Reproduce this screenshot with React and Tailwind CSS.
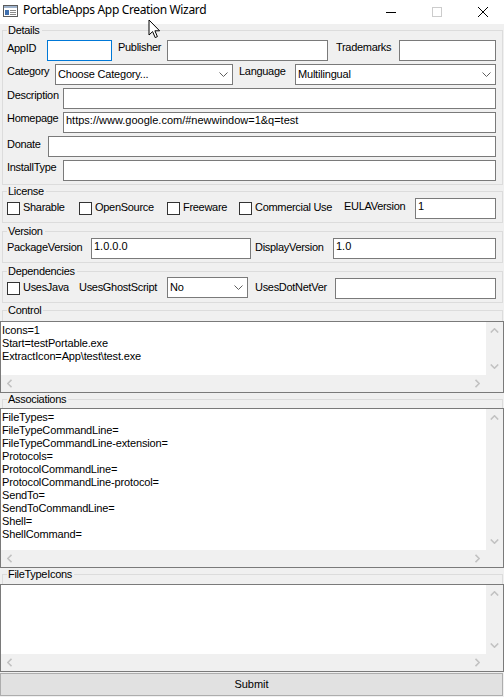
import React from "react";

const label = "shrink-0 whitespace-nowrap text-[11px] leading-[13px] tracking-[-0.3px] text-black";

function Label({ className = "", children }) {
  return <span className={`${label} ${className}`}>{children}</span>;
}

function Input({ className = "", value = "", focused = false }) {
  return (
    <div
      className={`h-[21px] shrink-0 overflow-hidden whitespace-nowrap border bg-white pl-[2px] pt-[1px] text-[11px] leading-[13px] text-black ${
        focused ? "border-[#0078d7]" : "border-[#7a7a7a]"
      } ${className}`}
    >
      {value}
    </div>
  );
}

function Chevron() {
  return (
    <svg width="9" height="5" viewBox="0 0 9 5" className="shrink-0">
      <polyline points="0.5,0.5 4.5,4.5 8.5,0.5" fill="none" stroke="#5f5f5f" strokeWidth="1" />
    </svg>
  );
}

function Select({ className = "", value }) {
  return (
    <div
      className={`flex h-[21px] shrink-0 items-center justify-between border border-[#7a7a7a] bg-white pl-[2px] pr-[4px] text-[11px] leading-[13px] tracking-[-0.2px] text-black ${className}`}
    >
      <span className="whitespace-nowrap">{value}</span>
      <Chevron />
    </div>
  );
}

function Check({ className = "", children }) {
  return (
    <div className={`flex shrink-0 items-start ${className}`}>
      <div className="mt-[4px] h-[13px] w-[13px] shrink-0 border border-[#333333] bg-white" />
      <span className={`${label} ml-[3px] mt-[3px]`}>{children}</span>
    </div>
  );
}

function Group({ title, className = "", children }) {
  return (
    <fieldset className={`ml-[2px] mr-[1px] border border-[#dcdcdc] pl-[4px] pr-[6px] ${className}`}>
      <legend className="ml-0 pl-[1px] pr-[2px] text-[11px] leading-[13px] tracking-[-0.3px] text-black">
        {title}
      </legend>
      {children}
    </fieldset>
  );
}

function Arrow({ dir }) {
  const pts = {
    up: "0.8,4.5 4.5,0.8 8.2,4.5",
    down: "0.8,0.5 4.5,4.2 8.2,0.5",
  };
  if (dir === "left" || dir === "right") {
    const p = dir === "left" ? "4.5,0.8 0.8,4.5 4.5,8.2" : "0.5,0.8 4.2,4.5 0.5,8.2";
    return (
      <svg width="5" height="9" viewBox="0 0 5 9">
        <polyline points={p} fill="none" stroke="#c2c2c2" strokeWidth="1.6" />
      </svg>
    );
  }
  return (
    <svg width="9" height="5" viewBox="0 0 9 5">
      <polyline points={pts[dir]} fill="none" stroke="#c2c2c2" strokeWidth="1.6" />
    </svg>
  );
}

function TextArea({ className = "", lines = [] }) {
  return (
    <div className={`flex w-full flex-col border border-[#7a7a7a] bg-[#f0f0f0] ${className}`}>
      <div className="flex min-h-0 flex-1">
        <div className="flex-1 overflow-hidden bg-white pl-[1px] pt-[2px] text-[11px] leading-[13px] tracking-[-0.15px] text-black">
          {lines.map((l, i) => (
            <div key={i} className="whitespace-pre">
              {l}
            </div>
          ))}
        </div>
        <div className="flex w-[17px] flex-col justify-between">
          <div className="flex h-[17px] items-center justify-center">
            <Arrow dir="up" />
          </div>
          <div className="flex h-[17px] items-center justify-center">
            <Arrow dir="down" />
          </div>
        </div>
      </div>
      <div className="flex h-[17px] shrink-0 items-center justify-between pr-[17px]">
        <div className="flex w-[17px] justify-center">
          <Arrow dir="left" />
        </div>
        <div className="flex w-[17px] justify-center">
          <Arrow dir="right" />
        </div>
      </div>
    </div>
  );
}

export default function App() {
  return (
    <div className="relative h-[697px] w-[504px] overflow-hidden bg-[#f0f0f0] font-['Liberation_Sans',Arial,sans-serif]">
      {/* title bar */}
      <div className="flex h-[24px] items-start bg-white">
        <svg width="16" height="13" viewBox="0 0 16 13" className="ml-[3px] mt-[5px] shrink-0">
          <rect x="0.5" y="0.5" width="14" height="11" fill="#ffffff" stroke="#5b5b5b" />
          <rect x="1" y="1" width="13" height="2" fill="#9fb3cc" />
          <rect x="2" y="5" width="4" height="5" fill="#3f6fae" />
          <line x1="7" y1="5.5" x2="13" y2="5.5" stroke="#8a8a8a" />
          <line x1="7" y1="7.5" x2="13" y2="7.5" stroke="#8a8a8a" />
          <line x1="7" y1="9.5" x2="13" y2="9.5" stroke="#8a8a8a" />
        </svg>
        <span className="ml-[4px] pt-[2px] font-['Noto_Sans',sans-serif] text-[12px] leading-[16px] tracking-[-0.35px] text-black">
          PortableApps App Creation Wizard
        </span>
        <div className="-mr-[2px] ml-auto flex h-full">
          <div className="flex w-[46px] items-center justify-center">
            <svg width="10" height="1" viewBox="0 0 10 1">
              <rect width="10" height="1" fill="#000" />
            </svg>
          </div>
          <div className="flex w-[46px] items-center justify-center">
            <svg width="10" height="10" viewBox="0 0 10 10">
              <rect x="0.5" y="0.5" width="9" height="9" fill="none" stroke="#cccccc" />
            </svg>
          </div>
          <div className="flex w-[46px] items-center justify-center">
            <svg width="10" height="10" viewBox="0 0 10 10">
              <path d="M0 0 L10 10 M10 0 L0 10" stroke="#000" strokeWidth="1" />
            </svg>
          </div>
        </div>
      </div>

      {/* Details */}
      <Group title="Details">
        <div className="mb-[3px] mt-[3px] flex flex-col gap-[3px]">
          <div className="flex h-[21px] items-start">
            <Label className="mt-[2px] w-[40px]">AppID</Label>
            <Input className="w-[65px]" focused />
            <Label className="ml-[6px] mt-[1px] w-[49px]">Publisher</Label>
            <Input className="w-[161px]" />
            <Label className="ml-[8px] mt-[1px] w-[63px]">Trademarks</Label>
            <Input className="flex-1" />
          </div>
          <div className="flex h-[21px] items-start">
            <Label className="mt-[1px] w-[48px]">Category</Label>
            <Select className="w-[178px]" value="Choose Category..." />
            <Label className="ml-[6px] mt-[1px] w-[56px]">Language</Label>
            <Select className="flex-1" value="Multilingual" />
          </div>
          <div className="flex h-[21px] items-start">
            <Label className="mt-[1px] w-[56px]">Description</Label>
            <Input className="flex-1" />
          </div>
          <div className="flex h-[21px] items-start">
            <Label className="w-[56px]">Homepage</Label>
            <Input className="flex-1" value="https://www.google.com/#newwindow=1&q=test" />
          </div>
          <div className="flex h-[21px] items-start">
            <Label className="mt-[2px] w-[41px]">Donate</Label>
            <Input className="flex-1" />
          </div>
          <div className="flex h-[21px] items-start">
            <Label className="mt-[1px] w-[56px]">InstallType</Label>
            <Input className="flex-1" />
          </div>
        </div>
      </Group>

      {/* License */}
      <Group title="License">
        <div className="mb-[3px] flex h-[21px] items-start">
          <Check className="w-[72px]">Sharable</Check>
          <Check className="w-[88px]">OpenSource</Check>
          <Check className="w-[72px]">Freeware</Check>
          <Check className="w-[105px]">Commercial Use</Check>
          <Label className="mt-[2px] w-[71px]">EULAVersion</Label>
          <Input className="flex-1" value="1" />
        </div>
      </Group>

      {/* Version */}
      <Group title="Version" className="mt-[2px]">
        <div className="mb-[3px] flex h-[21px] items-start">
          <Label className="mt-[3px] w-[84px]">PackageVersion</Label>
          <Input className="w-[160px]" value="1.0.0.0" />
          <Label className="ml-[4px] mt-[3px] w-[78px]">DisplayVersion</Label>
          <Input className="flex-1" value="1.0" />
        </div>
      </Group>

      {/* Dependencies */}
      <Group title="Dependencies" className="mt-[2px]">
        <div className="mb-[3px] flex h-[21px] items-start">
          <Check className="w-[72px]">UsesJava</Check>
          <Label className="mt-[3px] w-[88px]">UsesGhostScript</Label>
          <Select className="-mt-[1px] w-[81px]" value="No" />
          <Label className="ml-[7px] mt-[3px] w-[80px]">UsesDotNetVer</Label>
          <Input className="flex-1" />
        </div>
      </Group>

      {/* Control */}
      <Group title="Control" className="mt-[1px] border-b-0">
        <div className="h-[4px]" />
      </Group>
      <TextArea
        className="h-[72px]"
        lines={["Icons=1", "Start=testPortable.exe", "ExtractIcon=App\\test\\test.exe"]}
      />

      {/* Associations */}
      <Group title="Associations" className="border-b-0">
        <div className="h-[2px]" />
      </Group>
      <TextArea
        className="h-[160px]"
        lines={[
          "FileTypes=",
          "FileTypeCommandLine=",
          "FileTypeCommandLine-extension=",
          "Protocols=",
          "ProtocolCommandLine=",
          "ProtocolCommandLine-protocol=",
          "SendTo=",
          "SendToCommandLine=",
          "Shell=",
          "ShellCommand=",
        ]}
      />

      {/* FileTypeIcons */}
      <Group title="FileTypeIcons" className="border-b-0">
        <div className="h-[3px]" />
      </Group>
      <TextArea className="h-[88px]" lines={[]} />

      <button className="mt-[1px] block h-[23px] w-[503px] border border-[#adadad] bg-[#e1e1e1] text-[11px] leading-[13px] text-black">
        Submit
      </button>

      {/* mouse pointer */}
      <svg width="13" height="20" viewBox="0 0 13 20" className="absolute left-[148px] top-[19px]">
        <path d="M1 1 V16 L4.6 12.6 L7.2 18.6 L9.4 17.6 L6.9 11.8 H11.6 Z" fill="#fff" stroke="#000" strokeWidth="1" strokeLinejoin="miter" />
      </svg>
    </div>
  );
}
